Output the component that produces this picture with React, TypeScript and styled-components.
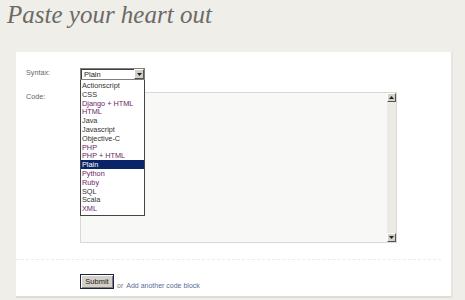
import React from 'react'
import styled, { createGlobalStyle } from 'styled-components'

const GlobalStyle = createGlobalStyle`
  html, body {
    margin: 0;
    padding: 0;
    background: #efeee9;
    width: 465px;
    height: 300px;
    overflow: hidden;
  }
`

const languages = [
  { name: 'Actionscript', visited: false },
  { name: 'CSS', visited: false },
  { name: 'Django + HTML', visited: true },
  { name: 'HTML', visited: true },
  { name: 'Java', visited: false },
  { name: 'Javascript', visited: false },
  { name: 'Objective-C', visited: false },
  { name: 'PHP', visited: true },
  { name: 'PHP + HTML', visited: true },
  { name: 'Plain', visited: false },
  { name: 'Python', visited: true },
  { name: 'Ruby', visited: true },
  { name: 'SQL', visited: false },
  { name: 'Scala', visited: false },
  { name: 'XML', visited: true },
]

const Page = styled.div`
  width: 465px;
  height: 300px;
  font-family: 'Liberation Sans', Arial, sans-serif;
`

const Title = styled.h1`
  margin: 0;
  padding: 0 0 0 7px;
  height: 52px;
  font-family: 'Liberation Serif', 'Times New Roman', serif;
  font-style: italic;
  font-weight: normal;
  font-size: 25px;
  line-height: 30px;
  color: #6c6a66;
`

const Panel = styled.div`
  margin-left: 16px;
  width: 435px;
  height: 246px;
  box-sizing: border-box;
  background: #fff;
  border-bottom: 2px solid #dddcd6;
  box-shadow: 2px 0 0 #e6e5df;
  padding: 16px 0 0 10px;
`

const Row = styled.div<{ $top?: number }>`
  display: flex;
  align-items: flex-start;
  margin-top: ${(p) => p.$top ?? 0}px;
`

const Label = styled.div`
  width: 54px;
  font-size: 7.2px;
  line-height: 10px;
  color: #666;
`

const SelectWrap = styled.div`
  position: relative;
  z-index: 2;
`

const SelectBox = styled.div`
  width: 65px;
  height: 12px;
  box-sizing: border-box;
  border: 1px solid #7f7f7f;
  box-shadow: inset 1px 1px 0 #404040;
  background: #fff;
  display: flex;
  align-items: center;
  justify-content: space-between;
  font-size: 7.5px;
  color: #222;
  padding-left: 3px;
`

const ArrowButton = styled.div`
  width: 10px;
  height: 10px;
  box-sizing: border-box;
  background: #d4d0c8;
  border-top: 1px solid #fff;
  border-left: 1px solid #fff;
  border-right: 1px solid #555;
  border-bottom: 1px solid #555;
  display: flex;
  align-items: center;
  justify-content: center;
`

const DropList = styled.div`
  position: absolute;
  top: 12px;
  left: 0;
  width: 65px;
  box-sizing: border-box;
  border: 1px solid #444;
  border-top: none;
  background: #fff;
  padding: 1px 0 2px;
`

const Option = styled.div<{ $visited: boolean; $active: boolean }>`
  height: 8.8px;
  line-height: 9px;
  font-size: 7.3px;
  padding-left: 1px;
  white-space: nowrap;
  color: ${(p) => (p.$active ? '#fff' : p.$visited ? '#6a2468' : '#333')};
  background: ${(p) => (p.$active ? '#0a246a' : 'transparent')};
`

const CodeArea = styled.div`
  width: 317px;
  height: 151px;
  box-sizing: border-box;
  border: 1px solid #d9d8d3;
  background: #f8f8f6;
  display: flex;
  justify-content: flex-end;
`

const Scrollbar = styled.div`
  width: 9px;
  height: 100%;
  background: #ebeae5;
  display: flex;
  flex-direction: column;
  justify-content: space-between;
`

const ScrollButton = styled.div`
  width: 9px;
  height: 9px;
  box-sizing: border-box;
  background: #d4d0c8;
  border-top: 1px solid #fff;
  border-left: 1px solid #fff;
  border-right: 1px solid #555;
  border-bottom: 1px solid #555;
  display: flex;
  align-items: center;
  justify-content: center;
`

const Separator = styled.div`
  margin: 16px 10px 0 -10px;
  border-top: 1px dashed #ecebe8;
`

const Actions = styled.div`
  display: flex;
  align-items: flex-end;
  margin: 14px 0 0 54px;
  font-size: 7px;
  color: #777;
`

const SubmitButton = styled.div`
  width: 34px;
  height: 15px;
  box-sizing: border-box;
  border: 1px solid #1c2340;
  background: #d4d0c8;
  box-shadow: inset 1px 1px 0 #fff, inset -1px -1px 0 #808080;
  font-size: 7.5px;
  color: #222;
  display: flex;
  align-items: center;
  justify-content: center;
  margin-right: 3px;
`

const Link = styled.span`
  color: #5b6b98;
  margin-left: 3px;
`

const Triangle = ({ up }: { up?: boolean }) => (
  <svg width="5" height="3" viewBox="0 0 5 3">
    <path d={up ? 'M0 3 L2.5 0 L5 3 Z' : 'M0 0 L5 0 L2.5 3 Z'} fill="#222" />
  </svg>
)

export default function App() {
  return (
    <Page>
      <GlobalStyle />
      <Title>Paste your heart out</Title>
      <Panel>
        <Row>
          <Label>Syntax:</Label>
          <SelectWrap>
            <SelectBox>
              <span>Plain</span>
              <ArrowButton>
                <Triangle />
              </ArrowButton>
            </SelectBox>
            <DropList>
              {languages.map((l) => (
                <Option key={l.name} $visited={l.visited} $active={l.name === 'Plain'}>
                  {l.name}
                </Option>
              ))}
            </DropList>
          </SelectWrap>
        </Row>
        <Row $top={12}>
          <Label>Code:</Label>
          <CodeArea>
            <Scrollbar>
              <ScrollButton>
                <Triangle up />
              </ScrollButton>
              <ScrollButton>
                <Triangle />
              </ScrollButton>
            </Scrollbar>
          </CodeArea>
        </Row>
        <Separator />
        <Actions>
          <SubmitButton>Submit</SubmitButton>
          <span>or</span>
          <Link>Add another code block</Link>
        </Actions>
      </Panel>
    </Page>
  )
}
